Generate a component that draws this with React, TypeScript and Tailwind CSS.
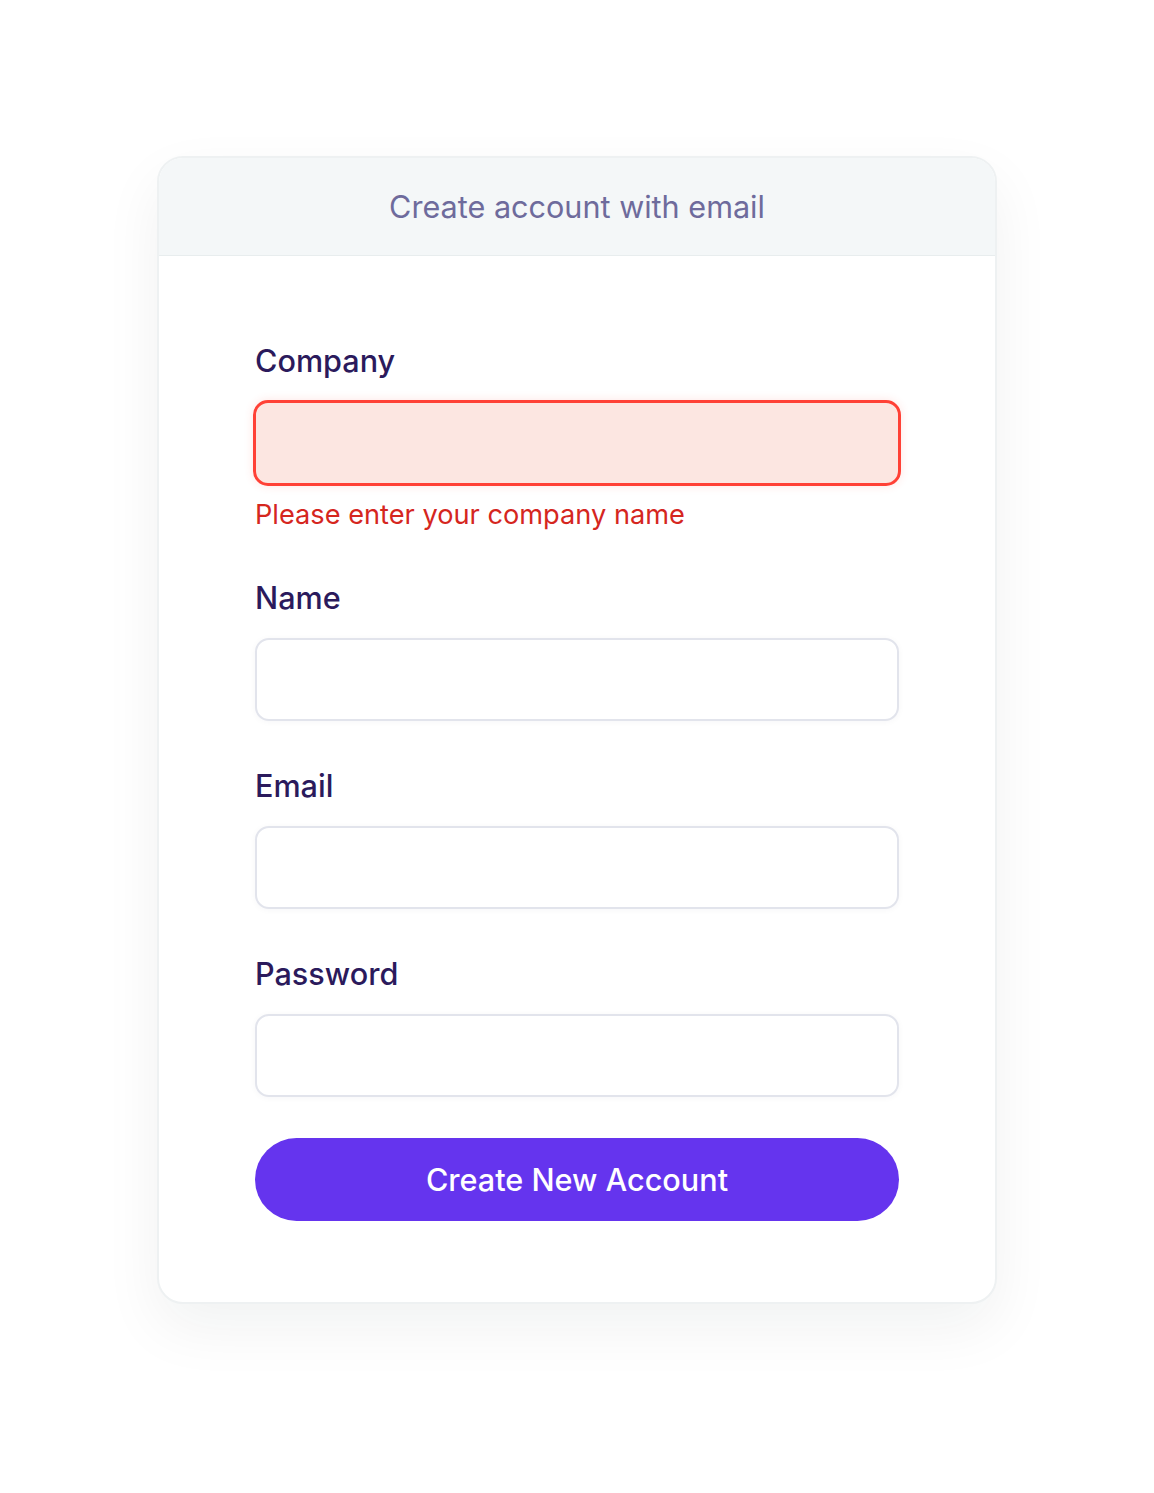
const font = { fontFamily: 'Inter, "Noto Sans", sans-serif' };

function Field({ label, error }: { label: string; error?: string }) {
  return (
    <div className="flex flex-col">
      <label className="text-[30.6px] leading-[36px] font-medium text-[#2b1a5c] mb-[22px]">{label}</label>
      {error ? (
        <>
          <input className="-mx-[2px] -my-[1.5px] h-[86px] rounded-[15px] border-[3.5px] border-[#ff4136] bg-[#fce6e1] px-6 text-[28px] outline-none shadow-[0_0_10px_rgba(255,68,56,0.14)]" />
          <p className="mt-[13px] text-[27.2px] leading-[36px] text-[#d5261e]">{error}</p>
        </>
      ) : (
        <input className="h-[83px] w-full rounded-[14px] border-2 border-[#e2e4ec] bg-white px-6 text-[28px] outline-none shadow-[0_1px_6px_rgba(30,30,80,0.04)]" />
      )}
    </div>
  );
}

export default function App() {
  return (
    <div className="min-h-[1493px] w-full bg-white pt-[156px]" style={font}>
      <div className="mx-auto w-[840px] overflow-hidden rounded-[26px] border-2 border-[#eef1f2] bg-white shadow-[0_24px_60px_rgba(20,30,40,0.06)]">
        <div className="flex h-[98px] items-center justify-center border-b border-[#e8edee] bg-[#f4f7f8]">
          <h2 className="text-[30.6px] font-normal text-[#6e6b9c]">Create account with email</h2>
        </div>
        <form className="flex flex-col px-[96px] pt-[87px] pb-[81px]" onSubmit={(e) => e.preventDefault()}>
          <div className="flex flex-col gap-[47px]">
            <Field label="Company" error="Please enter your company name" />
            <Field label="Name" />
            <Field label="Email" />
            <Field label="Password" />
          </div>
          <button
            type="submit"
            className="mt-[41px] h-[83px] w-full rounded-full bg-[#6534ee] text-[30.6px] font-medium text-white"
          >
            Create New Account
          </button>
        </form>
      </div>
    </div>
  );
}
